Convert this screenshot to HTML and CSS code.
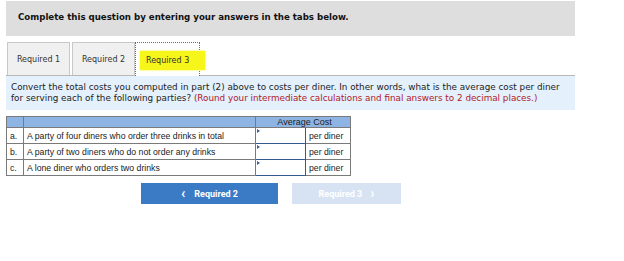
FILE: index.html
```html
<!DOCTYPE html>
<html>
<head>
<meta charset="utf-8">
<link rel="stylesheet" href="styles.css">
</head>
<body>
<div class="page">
  <div class="header">Complete this question by entering your answers in the tabs below.</div>
  <div class="tabs">
    <div class="tab">Required 1</div>
    <div class="tab">Required 2</div>
    <div class="tab active"><span class="hl">Required 3</span></div>
    <div class="tab-rest"></div>
  </div>
  <div class="info">
    <div class="line">Convert the total costs you computed in part (2) above to costs per diner. In other words, what is the average cost per diner</div>
    <div class="line"><span>for serving each of the following parties?</span> <span class="red">(Round your intermediate calculations and final answers to 2 decimal places.)</span></div>
  </div>
  <table class="grid">
    <tr class="head"><th class="c1"></th><th class="c2"></th><th colspan="2" class="c34">Average Cost</th></tr>
    <tr><td class="c1">a.</td><td class="c2">A party of four diners who order three drinks in total</td><td class="c3"><span class="mark"></span></td><td class="c4">per diner</td></tr>
    <tr><td class="c1">b.</td><td class="c2">A party of two diners who do not order any drinks</td><td class="c3"><span class="mark"></span></td><td class="c4">per diner</td></tr>
    <tr><td class="c1">c.</td><td class="c2">A lone diner who orders two drinks</td><td class="c3"><span class="mark"></span></td><td class="c4">per diner</td></tr>
  </table>
  <div class="nav">
    <div class="btn prev"><span class="chev">&#8249;</span>Required 2</div>
    <div class="btn next">Required 3<span class="chev r">&#8250;</span></div>
  </div>
</div>
</body>
</html>
```
FILE: styles.css
```css
html, body { margin: 0; padding: 0; background: #fff; }
.page { padding: 1px 0 0 6px; width: 569px; font-family: "DejaVu Sans", Verdana, sans-serif; }
.header {
  background: #dedede; height: 35px; box-sizing: border-box;
  padding: 11px 0 0 12px; font-weight: bold; font-size: 8.65px; color: #111;
}
.tabs { display: flex; margin-top: 6px; height: 33px; border-bottom: 1px solid #b8b8b8; }
.tab {
  width: 63px; box-sizing: border-box; background: #f0f0f0; border: 1px solid #c8c8c8; border-bottom: none;
  font-size: 8px; color: #333; display: flex; align-items: center; justify-content: center; margin-right: 2px;
}
.tab:first-child { margin-left: 1px; }
.tab.active {
  background: #fff; border: 1px dotted #5a6e9a; border-bottom: none; margin-right: 0; margin-left: -2px;
  width: 65px; margin-bottom: -1px; justify-content: flex-start; padding-left: 4px; padding-top: 1px;
}
.hl { background: #f6f61a; padding: 5px 16px 5px 6px; color: #333; box-shadow: 0 0 2px #f6f61a; white-space: nowrap; }
.info {
  background: #e4f0fb; padding: 6px 6px 4px 5px; height: 34px; box-sizing: border-box;
  font-size: 8.8px; line-height: 11px; color: #222;
}
.line { white-space: nowrap; }
.red { color: #b0182a; }
.grid { border-collapse: collapse; margin-top: 6px; font-family: "Liberation Sans", Arial, sans-serif; font-size: 8.7px; color: #222; }
.grid th, .grid td { border: 1px solid #7a7a7a; padding: 0 0 0 3px; height: 15px; text-align: left; font-weight: normal; }
.grid tr.head th { background: #8eb4e3; height: 10px; text-align: center; font-size: 9px; line-height: 10px; }
.c1 { width: 13px; }
.c2 { width: 228px; }
.c3 { width: 46px; position: relative; background: #fff; }
.grid td.c3 { border: 1px solid #34598f; }
.c4 { width: 41px; }
.mark { position: absolute; left: 1px; top: 1px; width: 0; height: 0; border-top: 2px solid transparent; border-bottom: 2px solid transparent; border-left: 3px solid #3a5f98; }
.nav { display: flex; margin: 7px 0 0 135px; gap: 14px; }
.btn { height: 21px; display: flex; align-items: center; justify-content: center; font-family: "Roboto", "Liberation Sans", sans-serif; font-weight: bold; font-size: 9px; color: #fff; }
.prev { width: 137px; background: #3b7bc6; }
.next { width: 109px; background: #d7e3f3; }
.chev { font-size: 14px; margin-right: 9px; line-height: 1; margin-top: -2px; }
.chev.r { margin-right: 0; margin-left: 8px; }
```
